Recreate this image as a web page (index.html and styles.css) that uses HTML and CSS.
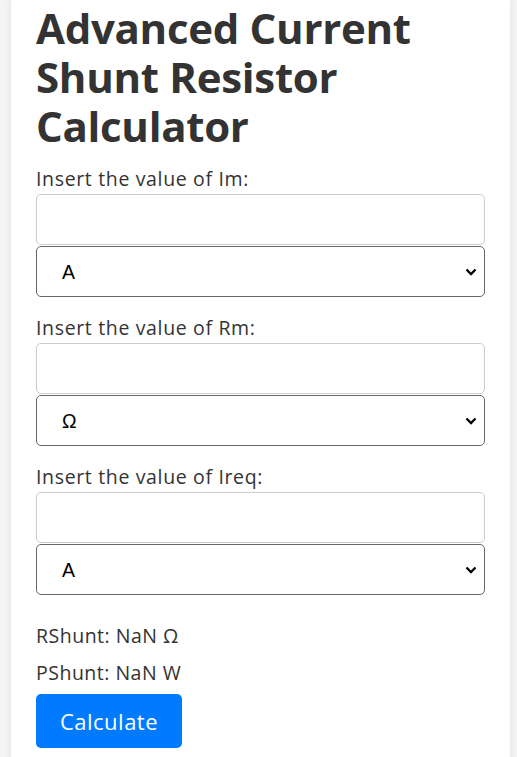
FILE: index.html
```html
<!DOCTYPE html>
<html>
<head>
    <title>Advanced Current Shunt Resistor Calculator</title>
    <link rel="stylesheet" href="styles.css">
</head>
<body>
    <div class="container">
        <h1>Advanced Current Shunt Resistor Calculator</h1>

        <div class="field">
            <label for="im">Insert the value of Im:</label>
            <input type="text" id="im">
            <select id="im-unit">
                <option>A</option>
                <option>mA</option>
                <option>&micro;A</option>
            </select>
        </div>

        <div class="field">
            <label for="rm">Insert the value of Rm:</label>
            <input type="text" id="rm">
            <select id="rm-unit">
                <option>&Omega;</option>
                <option>k&Omega;</option>
                <option>m&Omega;</option>
            </select>
        </div>

        <div class="field">
            <label for="ireq">Insert the value of Ireq:</label>
            <input type="text" id="ireq">
            <select id="ireq-unit">
                <option>A</option>
                <option>mA</option>
                <option>&micro;A</option>
            </select>
        </div>

        <div class="results">
            <p class="result" id="rshunt">RShunt: NaN &Omega;</p>
            <p class="result" id="pshunt">PShunt: NaN W</p>
        </div>

        <button onclick="calculate()">Calculate</button>
    </div>
    <script>
        function calculate() {
            const im = parseFloat(document.getElementById('im').value);
            const rm = parseFloat(document.getElementById('rm').value);
            const ireq = parseFloat(document.getElementById('ireq').value);
            // Rshunt = Im * Rm / (Ireq - Im)
            const rshunt = (im * rm) / (ireq - im);
            const pshunt = Math.pow(ireq - im, 2) * rshunt;
            document.getElementById('rshunt').textContent = `RShunt: ${rshunt} \u03A9`;
            document.getElementById('pshunt').textContent = `PShunt: ${pshunt} W`;
        }
    </script>
</body>
</html>
```

FILE: styles.css
```css
body {
    font-family: "Open Sans", sans-serif;
    margin: 0;
    background-color: #f4f4f4;
    color: #333;
}
.container {
    margin: 0 7px 0 11px;
    padding: 0 25px 10px;
    background: #fff;
    min-height: 100vh;
    box-shadow: 0 0 8px rgba(0,0,0,0.08);
}
h1 {
    font-size: 42px;
    line-height: 49px;
    letter-spacing: -0.3px;
    margin: 0;
    padding-top: 3px;
    color: #333;
}
.field {
    padding-bottom: 2px;
}
label {
    display: block;
    font-size: 19.5px;
    line-height: 24px;
    letter-spacing: 0.65px;
    margin: 17px 0 3px;
}
input, select {
    display: block;
    width: 100%;
    height: 51px;
    box-sizing: border-box;
    border-radius: 5px;
}
input {
    border: 1px solid #ccc;
    padding: 0 10px;
    font-size: 16px;
}
select {
    margin-top: 1px;
    border: 1px solid #666;
    padding: 0 25px;
    font-family: "Liberation Sans", Arial, sans-serif;
    font-size: 19.5px;
    color: #000;
    -webkit-appearance: none;
    appearance: none;
    background: #fff url("data:image/svg+xml,%3Csvg xmlns='http://www.w3.org/2000/svg' width='12' height='8' viewBox='0 0 12 8'%3E%3Cpath d='M1.5 1.5 L6 6 L10.5 1.5' fill='none' stroke='%23000' stroke-width='2.3'/%3E%3C/svg%3E") no-repeat right 7px center;
}
.results {
    padding-top: 27px;
}
.result {
    font-size: 19.5px;
    line-height: 24px;
    letter-spacing: 0.5px;
    margin: 0 0 13px;
}
button {
    margin-top: -4px;
    width: 146px;
    height: 54px;
    border: none;
    border-radius: 5px;
    background-color: #007bff;
    color: #fff;
    font-family: "Open Sans", sans-serif;
    font-size: 22px;
    letter-spacing: 0.5px;
}
```
